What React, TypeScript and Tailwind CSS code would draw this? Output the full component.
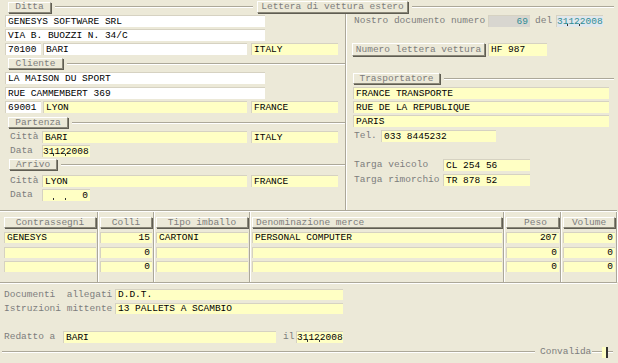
import React from "react";

const LBL = "text-[#7d7d7d]";
const YEL = "bg-[#ffffc4]";
const WHT = "bg-white";

function Line({ className = "" }: { className?: string }) {
  return <div className={`h-[2px] border-t border-[#aca899] bg-white ${className}`} />;
}

function Btn({ className, children }: { className: string; children: React.ReactNode }) {
  return (
    <div
      className={`flex items-center shrink-0 bg-[#ece9d8] border border-t-white border-l-white border-r-[#8a8778] border-b-[#8a8778] shadow-[1px_1px_0_#5f5d52] text-[#7d7d7d] whitespace-pre ${className}`}
    >
      {children}
    </div>
  );
}

function Field({
  className,
  children,
  right,
  date,
}: {
  className: string;
  children?: React.ReactNode;
  right?: boolean;
  date?: boolean;
}) {
  const pad = right ? "justify-end pr-[2px]" : date ? "pl-0" : "pl-[2px]";
  return (
    <div
      className={`relative flex items-center shrink-0 border-t border-l border-[#d6d2c2] whitespace-pre ${
        date ? "" : "overflow-hidden"
      } ${pad} ${className}`}
    >
      {children}
      {date && (
        <>
          <span className="absolute bottom-[1px] left-[10px] w-px h-[2px] bg-[#333]" />
          <span className="absolute bottom-[1px] left-[22px] w-px h-[2px] bg-[#333]" />
        </>
      )}
    </div>
  );
}

// table column: header button + three rows
type Col = {
  box: string;
  inner: string;
  head: string;
  title: string;
  rows: string[];
  right?: boolean;
};

const columns: Col[] = [
  { box: "w-[98px] pl-[4px]", inner: "w-[92px]", head: "justify-center", title: "Contrassegni", rows: ["GENESYS", "", ""] },
  { box: "w-[56px] pl-[2px]", inner: "w-[52px]", head: "justify-center", title: "Colli", rows: ["15", "0", "0"], right: true },
  { box: "w-[96px] pl-[2px]", inner: "w-[92px]", head: "justify-center", title: "Tipo imballo", rows: ["CARTONI", "", ""] },
  { box: "w-[254px] pl-[2px]", inner: "w-[250px]", head: "justify-start pl-[3px]", title: "Denominazione merce", rows: ["PERSONAL COMPUTER", "", ""] },
  { box: "w-[57px] pl-[2px]", inner: "w-[53px]", head: "justify-center pl-[6px]", title: "Peso", rows: ["207", "0", "0"], right: true },
  { box: "w-[56px] pl-[2px]", inner: "w-[52px]", head: "justify-center", title: "Volume", rows: ["0", "0", "0"], right: true },
];

export default function App() {
  return (
    <div className="w-[618px] h-[363px] overflow-hidden bg-[#ece9d8] font-['Liberation_Mono',monospace] text-[9.5px] leading-none text-black">
      {/* group headers */}
      <div className="flex items-center h-[12px] mt-[1px]">
        <Btn className="ml-[8px] w-[43px] h-[11px] justify-center">Ditta</Btn>
        <Line className="ml-[4px] w-[198px]" />
        <Btn className="ml-[4px] w-[151px] h-[12px] justify-center">Lettera di vettura estero</Btn>
        <Line className="ml-[4px] flex-1 mr-[4px]" />
      </div>

      <div className="flex h-[197px]">
        {/* mittente / cliente / partenza / arrivo */}
        <div className="w-[345px] shrink-0 flex flex-col">
          <Field className={`mt-[2px] ml-[5px] w-[260px] h-[12px] ${WHT}`}>GENESYS SOFTWARE SRL</Field>
          <Field className={`mt-[2px] ml-[5px] w-[260px] h-[12px] ${WHT}`}>VIA B. BUOZZI N. 34/C</Field>
          <div className="mt-[2px] flex h-[12px]">
            <Field className={`ml-[5px] w-[36px] h-[12px] ${WHT}`}>70100</Field>
            <Field className={`ml-[2px] w-[204px] h-[12px] ${WHT}`}>BARI</Field>
            <Field className={`ml-[4px] w-[87px] h-[12px] ${YEL}`}>ITALY</Field>
          </div>

          <div className="mt-[3px] flex items-center h-[11px]">
            <Btn className="ml-[8px] w-[55px] h-[11px] justify-center">Cliente</Btn>
            <Line className="ml-[4px] flex-1" />
          </div>
          <Field className={`mt-[3px] ml-[5px] w-[260px] h-[12px] ${WHT}`}>LA MAISON DU SPORT</Field>
          <Field className={`mt-[3px] ml-[5px] w-[260px] h-[12px] ${WHT}`}>RUE CAMMEMBERT 369</Field>
          <div className="mt-[2px] flex h-[12px]">
            <Field className={`ml-[5px] w-[36px] h-[12px] ${WHT}`}>69001</Field>
            <Field className={`ml-[2px] w-[204px] h-[12px] ${YEL}`}>LYON</Field>
            <Field className={`ml-[4px] w-[87px] h-[12px] ${YEL}`}>FRANCE</Field>
          </div>

          <div className="mt-[4px] flex items-center h-[11px]">
            <Btn className="ml-[8px] w-[60px] h-[11px] justify-center">Partenza</Btn>
            <Line className="ml-[4px] flex-1" />
          </div>
          <div className="mt-[3px] flex items-center h-[12px]">
            <span className={`ml-[10px] w-[32px] ${LBL}`}>Città</span>
            <Field className={`w-[205px] h-[12px] ${YEL}`}>BARI</Field>
            <Field className={`ml-[4px] w-[87px] h-[12px] ${YEL}`}>ITALY</Field>
          </div>
          <div className="mt-[2px] flex items-center h-[12px]">
            <span className={`ml-[10px] w-[32px] ${LBL}`}>Data</span>
            <Field className={`w-[48px] h-[12px] ${YEL}`} date>
              31122008
            </Field>
          </div>

          <div className="mt-[2px] flex items-center h-[11px]">
            <Btn className="ml-[9px] w-[48px] h-[11px] justify-center">Arrivo</Btn>
            <Line className="ml-[4px] flex-1" />
          </div>
          <div className="mt-[5px] flex items-center h-[12px]">
            <span className={`ml-[10px] w-[32px] ${LBL}`}>Città</span>
            <Field className={`w-[205px] h-[12px] ${YEL}`}>LYON</Field>
            <Field className={`ml-[4px] w-[87px] h-[12px] ${YEL}`}>FRANCE</Field>
          </div>
          <div className="mt-[2px] flex items-center h-[12px]">
            <span className={`ml-[10px] w-[32px] ${LBL}`}>Data</span>
            <Field className={`w-[48px] h-[12px] ${YEL}`} right date>
              0
            </Field>
          </div>
        </div>

        <div className="mt-[1px] w-[2px] border-l border-[#aca899] bg-white" />

        {/* documento / trasportatore */}
        <div className="flex-1 flex flex-col">
          <div className="mt-[2px] flex items-center h-[12px]">
            <span className={`ml-[7px] w-[134px] ${LBL}`}>Nostro documento numero</span>
            <Field className="w-[42px] h-[12px] bg-[#d8d6d0] border-[#a9a79c] text-[#2f8d96]" right>
              69
            </Field>
            <span className={`ml-[5px] w-[21px] ${LBL}`}>del</span>
            <Field className="w-[47px] h-[12px] bg-[#e1e7ec] border-[#a9a79c] text-[#2f8d96]" date>
              31122008
            </Field>
          </div>

          <div className="mt-[16px] flex items-center h-[13px]">
            <Btn className="ml-[5px] w-[133px] h-[13px] justify-center">Numero lettera vettura</Btn>
            <Field className={`ml-[3px] w-[59px] h-[13px] ${YEL}`}>HF 987</Field>
          </div>

          <div className="mt-[17px] flex items-center h-[11px]">
            <Btn className="ml-[6px] w-[87px] h-[11px] justify-center">Trasportatore</Btn>
            <Line className="ml-[4px] flex-1 mr-[4px]" />
          </div>
          <Field className={`mt-[3px] ml-[6px] w-[256px] h-[12px] ${YEL}`}>FRANCE TRANSPORTE</Field>
          <Field className={`mt-[2px] ml-[6px] w-[256px] h-[12px] ${YEL}`}>RUE DE LA REPUBLIQUE</Field>
          <Field className={`mt-[2px] ml-[6px] w-[256px] h-[12px] ${YEL}`}>PARIS</Field>
          <div className="mt-[3px] flex items-center h-[12px]">
            <span className={`ml-[7px] w-[27px] ${LBL}`}>Tel.</span>
            <Field className={`w-[115px] h-[12px] ${YEL}`}>033 8445232</Field>
          </div>

          <div className="mt-[17px] flex items-center h-[12px]">
            <span className={`ml-[7px] w-[89px] ${LBL} whitespace-pre`}>Targa veicolo</span>
            <Field className={`w-[87px] h-[12px] ${YEL}`}>CL 254 56</Field>
          </div>
          <div className="mt-[3px] flex items-center h-[12px]">
            <span className={`ml-[7px] w-[89px] ${LBL} whitespace-pre`}>Targa rimorchio</span>
            <Field className={`w-[87px] h-[12px] ${YEL}`}>TR 878 52</Field>
          </div>
        </div>
      </div>

      {/* merce */}
      <Line className="w-[617px]" />
      <div className="flex h-[70px]">
        {columns.map((c) => (
          <div
            key={c.title}
            className={`flex flex-col shrink-0 border-r border-[#aca899] shadow-[1px_0_0_#ffffff] ${c.box}`}
          >
            <Btn className={`mt-[5px] h-[11px] ${c.head} ${c.inner}`}>{c.title}</Btn>
            <Field className={`mt-[4px] h-[11px] ${YEL} ${c.inner}`} right={c.right}>
              {c.rows[0]}
            </Field>
            <Field className={`mt-[4px] h-[11px] ${YEL} ${c.inner}`} right={c.right}>
              {c.rows[1]}
            </Field>
            <Field className={`mt-[3px] h-[11px] ${YEL} ${c.inner}`} right={c.right}>
              {c.rows[2]}
            </Field>
          </div>
        ))}
      </div>
      <Line className="w-[617px]" />

      {/* note */}
      <div className="mt-[5px] flex items-center h-[11px]">
        <span className={`ml-[4px] w-[111px] ${LBL} whitespace-pre`}>Documenti  allegati</span>
        <Field className={`w-[228px] h-[11px] ${YEL}`}>D.D.T.</Field>
      </div>
      <div className="mt-[3px] flex items-center h-[11px]">
        <span className={`ml-[4px] w-[111px] ${LBL} whitespace-pre`}>Istruzioni mittente</span>
        <Field className={`w-[228px] h-[11px] ${YEL}`}>13 PALLETS A SCAMBIO</Field>
      </div>
      <div className="mt-[17px] flex items-center h-[12px]">
        <span className={`ml-[4px] w-[59px] ${LBL} whitespace-pre`}>Redatto a</span>
        <Field className={`w-[213px] h-[12px] ${YEL}`}>BARI</Field>
        <span className={`ml-[7px] w-[13px] ${LBL}`}>il</span>
        <Field className={`w-[47px] h-[12px] ${YEL}`} date>
          31122008
        </Field>
      </div>

      <div className="mt-[3px] flex items-center h-[12px]">
        <Line className="ml-[2px] w-[533px]" />
        <span className={`ml-[5px] w-[52px] ${LBL}`}>Convalida</span>
        <Line className="w-[10px]" />
        <div className={`w-[6px] h-[11px] ${YEL} border-r-2 border-[#333]`} />
        <Line className="w-[5px]" />
      </div>
    </div>
  );
}
